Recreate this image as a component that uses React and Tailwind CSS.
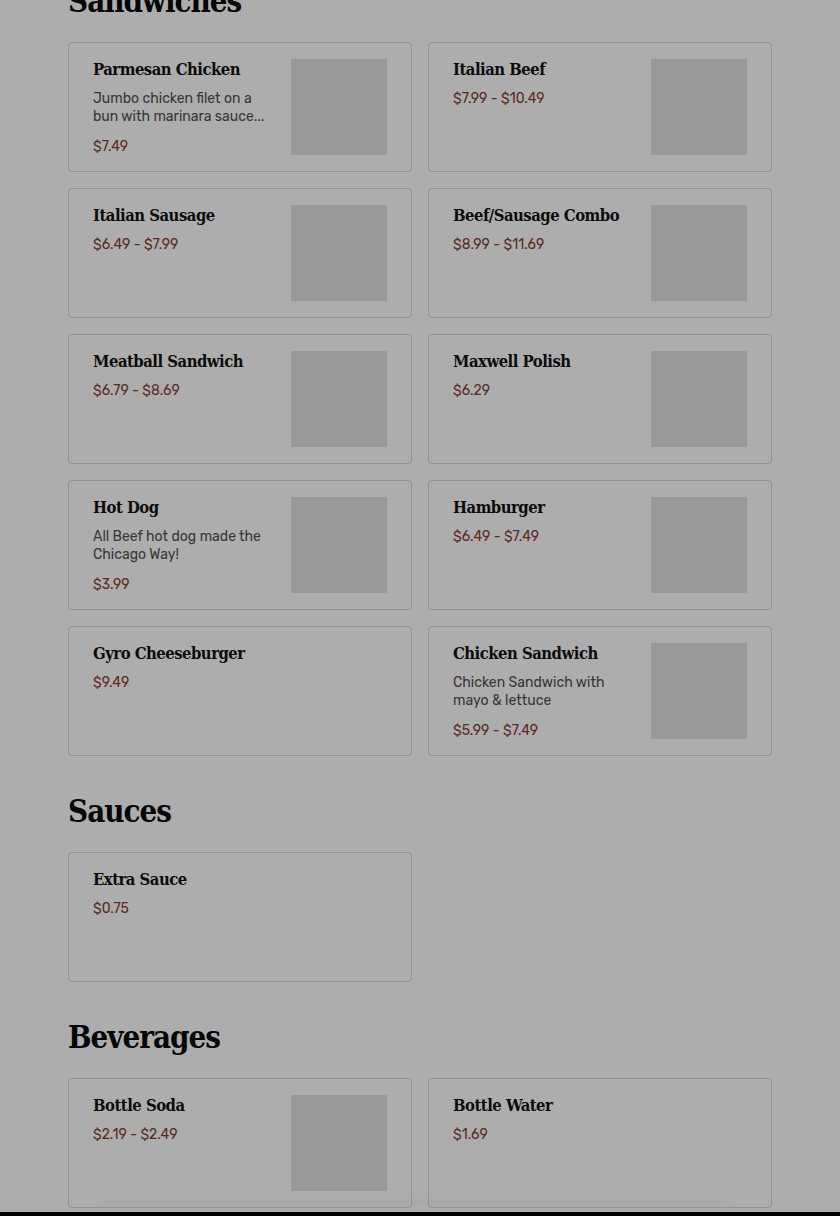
const sections = [
  {
    title: 'Sandwiches',
    items: [
      { name: 'Parmesan Chicken', desc: 'Jumbo chicken filet on a bun with marinara sauce...', price: '$7.49', img: true },
      { name: 'Italian Beef', price: '$7.99 - $10.49', img: true },
      { name: 'Italian Sausage', price: '$6.49 - $7.99', img: true },
      { name: 'Beef/Sausage Combo', price: '$8.99 - $11.69', img: true },
      { name: 'Meatball Sandwich', price: '$6.79 - $8.69', img: true },
      { name: 'Maxwell Polish', price: '$6.29', img: true },
      { name: 'Hot Dog', desc: 'All Beef hot dog made the Chicago Way!', price: '$3.99', img: true },
      { name: 'Hamburger', price: '$6.49 - $7.49', img: true },
      { name: 'Gyro Cheeseburger', price: '$9.49' },
      { name: 'Chicken Sandwich', desc: 'Chicken Sandwich with mayo & lettuce', price: '$5.99 - $7.49', img: true },
    ],
  },
  { title: 'Sauces', items: [{ name: 'Extra Sauce', price: '$0.75' }] },
  {
    title: 'Beverages',
    items: [
      { name: 'Bottle Soda', price: '$2.19 - $2.49', img: true },
      { name: 'Bottle Water', price: '$1.69' },
    ],
  },
]

const slab = "font-['DejaVu_Serif',serif] font-stretch-condensed"
const sans = "font-['Rubik','Inter','Noto_Sans',sans-serif]"

function ItemCard({ item }) {
  return (
    <div className="h-[130px] rounded-[4px] border border-[#929292] bg-[#adadad] flex gap-4 pl-6 pr-6 py-4">
      <div className="flex-1 min-w-0 pt-[1px]">
        <h3 className={`${slab} text-[16.5px] leading-[20px] font-bold tracking-[-0.5px] text-[#0b0b0b]`}>{item.name}</h3>
        {item.desc && (
          <p className={`${sans} mt-[10px] text-[14px] leading-[18px] text-[#363636] line-clamp-2`}>{item.desc}</p>
        )}
        <p className={`${sans} ${item.desc ? 'mt-[12px]' : 'mt-[10px]'} text-[14px] leading-[18px] text-[#5b2a22]`}>{item.price}</p>
      </div>
      {item.img && <div className="w-24 h-24 shrink-0 bg-[#999999]" />}
    </div>
  )
}

export default function App() {
  return (
    <div className="relative h-[1216px] overflow-hidden bg-[#adadad]">
      <div className="w-[704px] ml-[68px] -mt-[19px]">
        {sections.map(s => (
          <section key={s.title} className="mb-[35px]">
            <h2 className={`${slab} text-[31px] leading-[40px] font-bold tracking-[-1px] text-[#050505] mb-[21px]`}>{s.title}</h2>
            <div className="grid grid-cols-2 gap-4">
              {s.items.map(it => <ItemCard key={it.name} item={it} />)}
            </div>
          </section>
        ))}
      </div>
      <div className="absolute left-[100px] right-[110px] bottom-[4px] h-[6px] shadow-[0_-4px_10px_rgba(0,0,0,0.04)]" />
      <div className="absolute left-0 right-0 bottom-0 h-[4px] bg-black" />
    </div>
  )
}
